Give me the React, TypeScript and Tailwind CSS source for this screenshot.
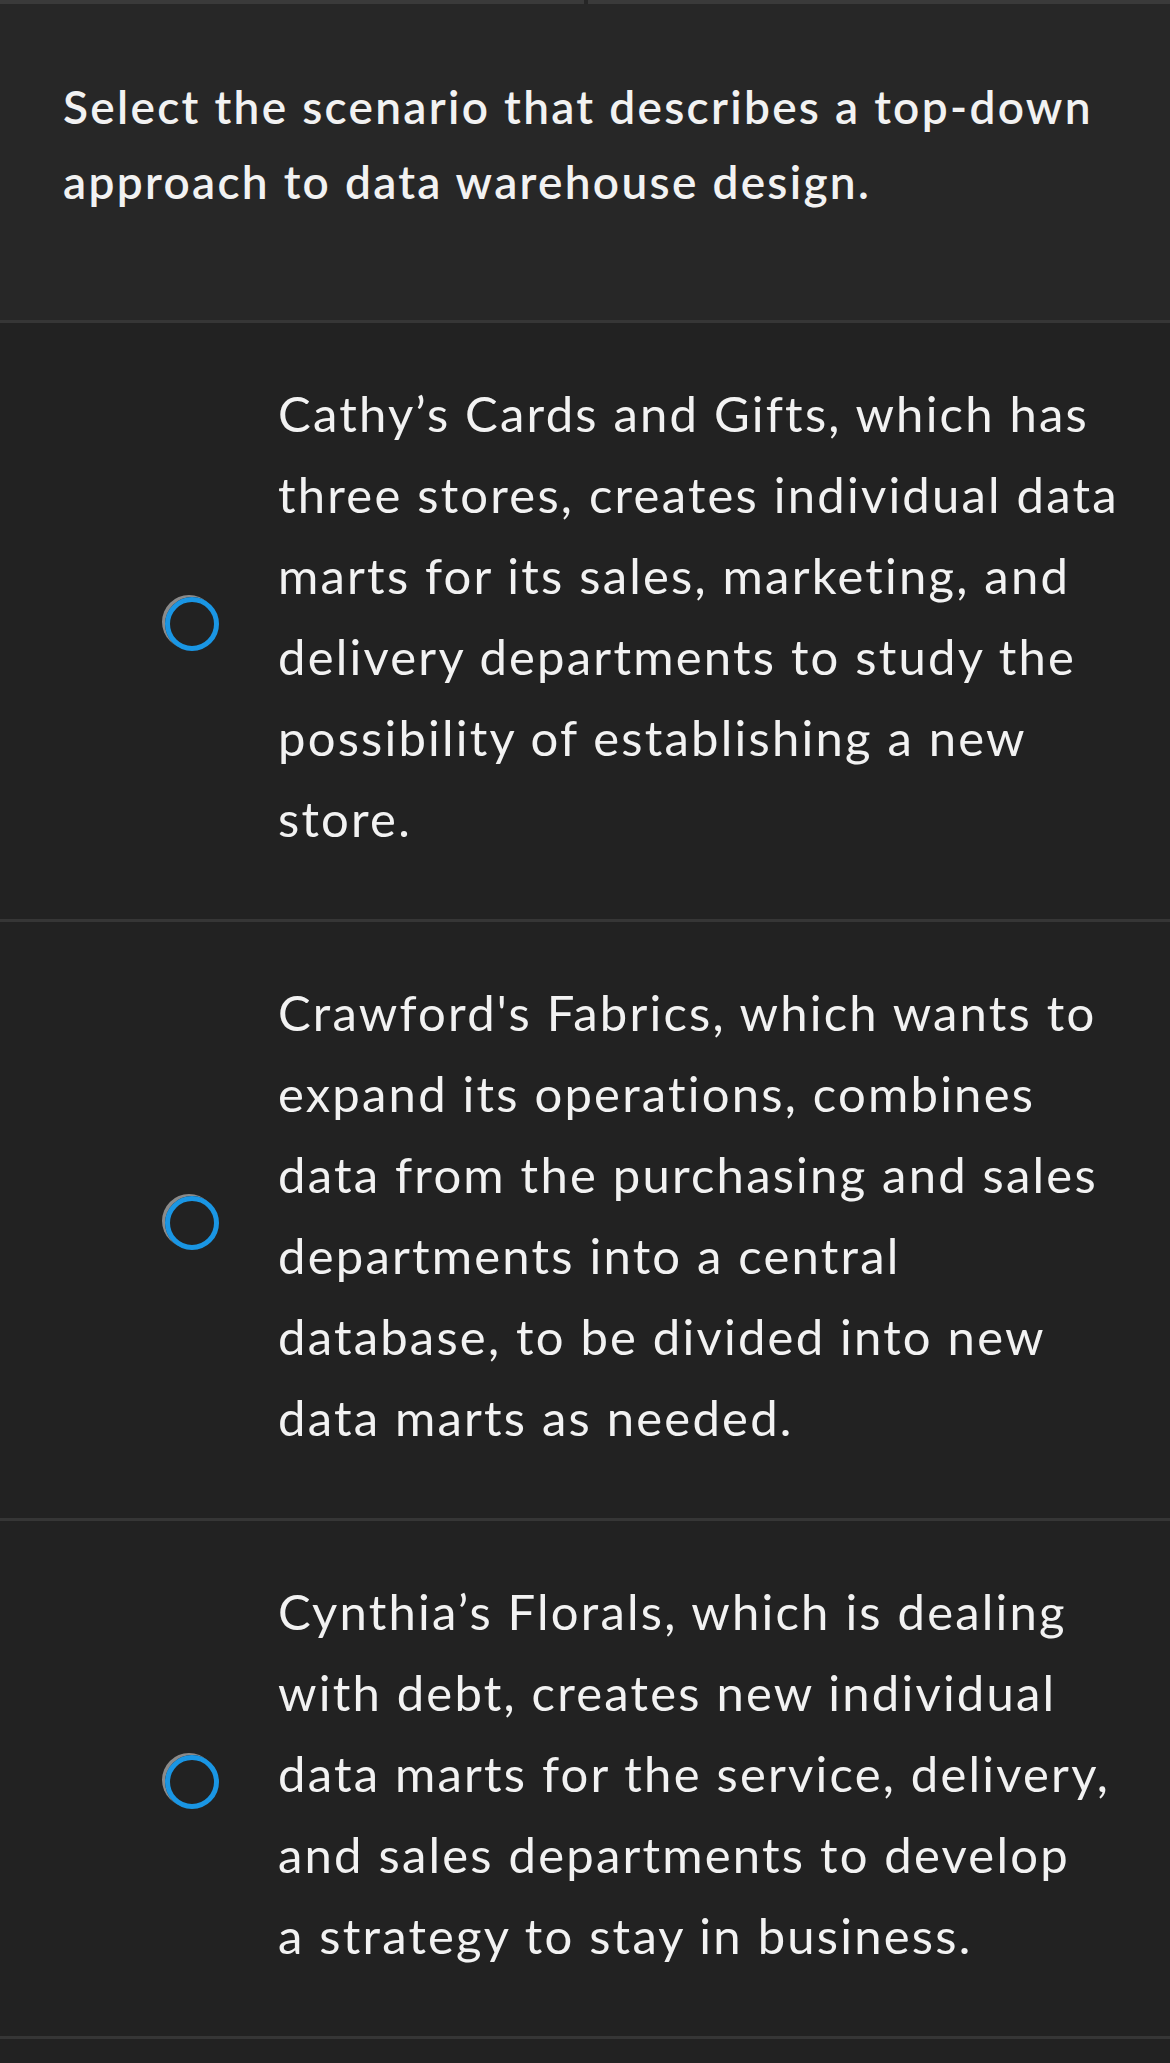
const question = ["Select the scenario that describes a top-down", "approach to data warehouse design."];

const options: string[][] = [
  [
    "Cathy’s Cards and Gifts, which has",
    "three stores, creates individual data",
    "marts for its sales, marketing, and",
    "delivery departments to study the",
    "possibility of establishing a new",
    "store.",
  ],
  [
    "Crawford's Fabrics, which wants to",
    "expand its operations, combines",
    "data from the purchasing and sales",
    "departments into a central",
    "database, to be divided into new",
    "data marts as needed.",
  ],
  [
    "Cynthia’s Florals, which is dealing",
    "with debt, creates new individual",
    "data marts for the service, delivery,",
    "and sales departments to develop",
    "a strategy to stay in business.",
  ],
];

function Radio() {
  return (
    <div className="w-[54px] h-[54px] mt-[16px] shrink-0 rounded-full border-[5px] border-[#1a96e4] shadow-[-3px_-2px_0_0_#8a8a8a]" />
  );
}

export default function App() {
  return (
    <div className="w-[1170px] min-h-[2063px] bg-[#222222] text-[#f2f2f2]" style={{ fontFamily: "Lato, 'Open Sans', sans-serif" }}>
      {/* top edge */}
      <div className="flex h-[4px]">
        <div className="w-[584px] bg-[#3a3a3a]" />
        <div className="w-[4px] bg-[#262626]" />
        <div className="flex-1 bg-[#3a3a3a]" />
      </div>

      {/* question */}
      <div className="bg-[#272727] pl-[63px] pt-[65px] pb-[101px]">
        <h1 className="text-[46px] font-semibold leading-[75px] tracking-[0.05em]">
          {question.map((l) => (
            <span key={l} className="block whitespace-nowrap">{l}</span>
          ))}
        </h1>
      </div>

      <div className="border-t-[3px] border-[#363636]">
        {options.map((lines, i) => (
          <div key={i} className="flex items-center gap-[59px] pl-[165px] pt-[50px] pb-[60px] border-b-[3px] border-[#363636]">
            <Radio />
            <p className="text-[49px] leading-[81px] tracking-[0.045em]">
              {lines.map((l) => (
                <span key={l} className="block whitespace-nowrap">{l}</span>
              ))}
            </p>
          </div>
        ))}
      </div>
    </div>
  );
}
